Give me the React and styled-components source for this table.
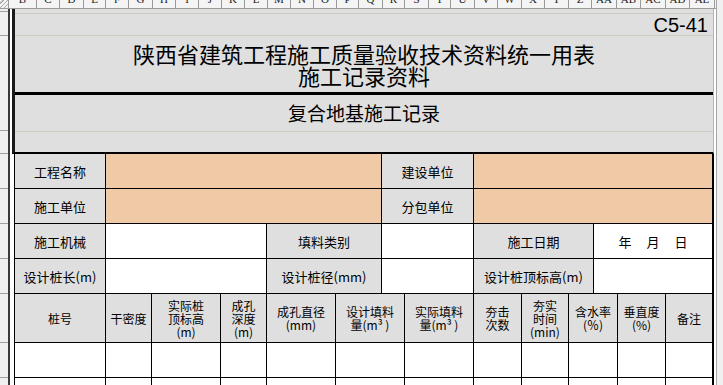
import React from "react";
import styled, { createGlobalStyle } from "styled-components";

const GlobalStyle = createGlobalStyle`
  html, body {
    margin: 0;
    padding: 0;
    background: #fff;
  }
  body {
    font-family: "Noto Sans CJK SC", "Liberation Sans", sans-serif;
    color: #000;
  }
`;

const Page = styled.div`
  width: 723px;
  height: 385px;
  overflow: hidden;
  display: flex;
  background: #fff;
`;

const Main = styled.div`
  width: 716px;
  flex: none;
  display: flex;
  flex-direction: column;
`;

const ScrollTrack = styled.div`
  flex: 1;
  background: #f0f0f0;
  border-left: 1px solid #a6a6a6;
`;

const ColumnBar = styled.div`
  height: 9px;
  flex: none;
  display: flex;
  box-sizing: border-box;
  border-bottom: 1px solid #9a9a9a;
  background: #f4f4f4;
  overflow: hidden;
`;

const Corner = styled.div`
  width: 9px;
  flex: none;
  box-sizing: border-box;
  border-right: 1px solid #9a9a9a;
  background: repeating-linear-gradient(135deg, #f4f4f4 0 2px, #a8a8a8 2px 3px);
`;

const ColLetter = styled.div`
  width: ${(p) => p.$w}px;
  flex: none;
  box-sizing: border-box;
  border-right: 1px solid #9a9a9a;
  overflow: hidden;
  text-align: center;
  font: 11px/12px "Liberation Serif", serif;
  color: #222;
  & > span {
    display: block;
    margin-top: -7px;
  }
`;

const Sheet = styled.div`
  flex: 1;
  display: flex;
  min-height: 0;
`;

const RowRuler = styled.div`
  width: 8px;
  flex: none;
  background: #f0f0f0;
  display: flex;
  flex-direction: column;
`;

const RowMark = styled.div`
  height: ${(p) => p.$h}px;
  flex: none;
  box-sizing: border-box;
  border-bottom: 1px solid #a0a0a0;
`;

const FreezeLine = styled.div`
  width: 2px;
  flex: none;
  background: #3a3a3a;
`;

const Content = styled.div`
  width: 702px;
  margin-left: 2px;
  flex: none;
  display: flex;
  flex-direction: column;
`;

const TitleBlock = styled.div`
  background: #dfdfdf;
  border-left: 3px solid #1a1a1a;
  border-right: 1px solid #b5b5b5;
  border-bottom: 2px solid #000;
`;

const Band = styled.div`
  height: ${(p) => p.$h}px;
  border-bottom: ${(p) => p.$rule || "none"};
  display: flex;
  flex-direction: column;
  align-items: ${(p) => (p.$end ? "flex-end" : "center")};
  justify-content: center;
`;

const Code = styled.div`
  font: 20px/20px "Liberation Sans", sans-serif;
  padding-right: 5px;
`;

const MainTitle = styled.div`
  font-size: 22px;
  line-height: 22px;
  text-align: center;
`;

const SubTitle = styled.div`
  font-size: 19px;
  line-height: 20px;
`;

const Form = styled.div`
  width: 700px;
  margin-left: 2px;
  box-sizing: border-box;
  display: grid;
  grid-template-columns: 90px 45px 68px 45px 68px 45px 22px 68px 47px 46px 24px 23px 47px 46px;
  grid-template-rows: 34px 34px 34px 34px 48px 34px 34px;
  gap: 1px;
  background: #000;
  border-left: 1px solid #000;
  border-right: 2px solid #000;
`;

const tones = {
  label: "#dfdfdf",
  fill: "#f0caa6",
  blank: "#fff",
};

const Cell = styled.div`
  grid-column: span ${(p) => p.$span || 1};
  background: ${(p) => tones[p.$tone || "blank"]};
  display: flex;
  align-items: center;
  justify-content: center;
  text-align: center;
  font-size: 13px;
  line-height: 13px;
  white-space: nowrap;
`;

const HeadCell = styled(Cell)`
  font-size: 12px;
  line-height: 13px;
`;

const DateParts = styled.div`
  display: flex;
  gap: 15px;
`;

const columns = [
  ["B", 28], ["C", 23], ["D", 24], ["E", 22], ["F", 23], ["G", 24], ["H", 23],
  ["I", 23], ["J", 23], ["K", 23], ["L", 23], ["M", 23], ["N", 23], ["O", 23],
  ["P", 22], ["Q", 24], ["R", 22], ["S", 24], ["T", 22], ["U", 24], ["V", 23],
  ["W", 24], ["X", 23], ["Y", 24], ["Z", 23], ["AA", 25], ["AB", 24], ["AC", 25],
  ["AD", 24], ["AE", 25],
];

const rowHeights = [3, 24, 95, 23, 35, 35, 35, 35, 49, 35, 35];

const tableHead = [
  { span: 1, lines: ["桩号"] },
  { span: 1, lines: ["干密度"] },
  { span: 1, lines: ["实际桩", "顶标高", "(m)"] },
  { span: 1, lines: ["成孔", "深度", "(m)"] },
  { span: 1, lines: ["成孔直径", "(mm)"] },
  { span: 2, lines: ["设计填料", "量(m³ )"] },
  { span: 1, lines: ["实际填料", "量(m³ )"] },
  { span: 1, lines: ["夯击", "次数"] },
  { span: 1, lines: ["夯实", "时间", "(min)"] },
  { span: 2, lines: ["含水率", "(％)"] },
  { span: 1, lines: ["垂直度", "(%)"] },
  { span: 1, lines: ["备注"] },
];

const DataRow = () =>
  tableHead.map((h, i) => <Cell key={i} $span={h.span} />);

const App = () => (
  <>
    <GlobalStyle />
    <Page>
      <Main>
        <ColumnBar>
          <Corner />
          {columns.map(([name, w]) => (
            <ColLetter key={name} $w={w}>
              <span>{name}</span>
            </ColLetter>
          ))}
        </ColumnBar>
        <Sheet>
          <RowRuler>
            {rowHeights.map((h, i) => (
              <RowMark key={i} $h={h} />
            ))}
          </RowRuler>
          <FreezeLine />
          <Content>
            <TitleBlock>
              <Band $h={4} $rule="1px solid #cfcac1" />
              <Band $h={21} $rule="1px solid #cfcac1" $end>
                <Code>C5-41</Code>
              </Band>
              <Band $h={56} $rule="3px solid #000">
                <MainTitle>
                  陕西省建筑工程施工质量验收技术资料统一用表
                  <br />
                  施工记录资料
                </MainTitle>
              </Band>
              <Band $h={36} $rule="1px solid #cfcac1">
                <SubTitle>复合地基施工记录</SubTitle>
              </Band>
              <Band $h={20} />
            </TitleBlock>
            <Form>
              <Cell $tone="label">工程名称</Cell>
              <Cell $tone="fill" $span={5} />
              <Cell $tone="label" $span={2}>建设单位</Cell>
              <Cell $tone="fill" $span={6} />

              <Cell $tone="label">施工单位</Cell>
              <Cell $tone="fill" $span={5} />
              <Cell $tone="label" $span={2}>分包单位</Cell>
              <Cell $tone="fill" $span={6} />

              <Cell $tone="label">施工机械</Cell>
              <Cell $span={3} />
              <Cell $tone="label" $span={2}>填料类别</Cell>
              <Cell $span={2} />
              <Cell $tone="label" $span={3}>施工日期</Cell>
              <Cell $span={3}>
                <DateParts>
                  <span>年</span>
                  <span>月</span>
                  <span>日</span>
                </DateParts>
              </Cell>

              <Cell $tone="label">设计桩长(m)</Cell>
              <Cell $span={3} />
              <Cell $tone="label" $span={2}>设计桩径(mm)</Cell>
              <Cell $span={2} />
              <Cell $tone="label" $span={3}>设计桩顶标高(m)</Cell>
              <Cell $span={3} />

              {tableHead.map((h, i) => (
                <HeadCell key={i} $tone="label" $span={h.span}>
                  <div>
                    {h.lines.map((l, j) => (
                      <div key={j}>{l}</div>
                    ))}
                  </div>
                </HeadCell>
              ))}

              <DataRow />
              <DataRow />
            </Form>
          </Content>
        </Sheet>
      </Main>
      <ScrollTrack />
    </Page>
  </>
);

export default App;
